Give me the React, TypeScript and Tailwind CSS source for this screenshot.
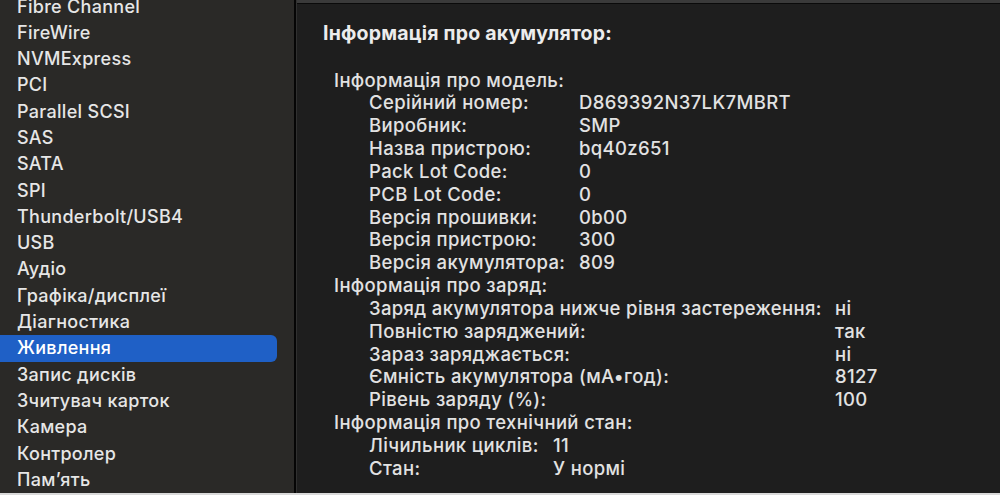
const SIDEBAR_ITEMS = [
  "Fibre Channel",
  "FireWire",
  "NVMExpress",
  "PCI",
  "Parallel SCSI",
  "SAS",
  "SATA",
  "SPI",
  "Thunderbolt/USB4",
  "USB",
  "Аудіо",
  "Графіка/дисплеї",
  "Діагностика",
  "Живлення",
  "Запис дисків",
  "Зчитувач карток",
  "Камера",
  "Контролер",
  "Пам’ять",
];

const SELECTED = "Живлення";

type Group = {
  title: string;
  labelWidth: string;
  rows: [string, string][];
};

const GROUPS: Group[] = [
  {
    title: "Інформація про модель:",
    labelWidth: "w-[210px]",
    rows: [
      ["Серійний номер:", "D869392N37LK7MBRT"],
      ["Виробник:", "SMP"],
      ["Назва пристрою:", "bq40z651"],
      ["Pack Lot Code:", "0"],
      ["PCB Lot Code:", "0"],
      ["Версія прошивки:", "0b00"],
      ["Версія пристрою:", "300"],
      ["Версія акумулятора:", "809"],
    ],
  },
  {
    title: "Інформація про заряд:",
    labelWidth: "w-[466px]",
    rows: [
      ["Заряд акумулятора нижче рівня застереження:", "ні"],
      ["Повністю заряджений:", "так"],
      ["Зараз заряджається:", "ні"],
      ["Ємність акумулятора (мА•год):", "8127"],
      ["Рівень заряду (%):", "100"],
    ],
  },
  {
    title: "Інформація про технічний стан:",
    labelWidth: "w-[184px]",
    rows: [
      ["Лічильник циклів:", "11"],
      ["Стан:", "У нормі"],
    ],
  },
];

export default function App() {
  return (
    <div className="w-[1000px] h-[495px] flex flex-col overflow-hidden bg-[#1e1e1e] font-['Inter','Noto_Sans',sans-serif] antialiased">
      <div className="flex flex-1 min-h-0">
        {/* Sidebar */}
        <div className="w-[294px] shrink-0 bg-[#2a2927] overflow-hidden">
          <ul className="-mt-[6.5px]">
            {SIDEBAR_ITEMS.map((item) => {
              const isSelected = item === SELECTED;
              return (
                <li
                  key={item}
                  className={
                    isSelected
                      ? "w-[277px] h-[26.3px] leading-[26.3px] pl-[17px] text-[18px] font-medium tracking-[0.3px] whitespace-nowrap text-white bg-[#1f60c6] rounded-r-md"
                      : "w-[277px] h-[26.3px] leading-[26.3px] pl-[17px] text-[18px] font-medium tracking-[0.3px] whitespace-nowrap text-[#e6e6e6]"
                  }
                >
                  {item}
                </li>
              );
            })}
          </ul>
        </div>

        <div className="w-[2px] bg-[#050505]" />
        <div className="w-px bg-[#303030]" />

        {/* Details */}
        <div className="flex-1 flex flex-col min-w-0">
          <div className="h-[3px] bg-[#3a3a3a]" />
          <div className="h-px bg-[#0a0a0a]" />
          <div className="pl-[26px] pt-[17.5px] text-[18.5px] font-medium tracking-[0.35px] text-[#e2e2e2] whitespace-nowrap">
            <div className="leading-[23px] text-[19.5px] font-bold tracking-[0.2px] text-[#ececec]">
              Інформація про акумулятор:
            </div>
            <div className="mt-[24px] pl-[11px]">
              {GROUPS.map((group) => (
                <div key={group.title}>
                  <div className="leading-[22.85px]">{group.title}</div>
                  {group.rows.map(([label, value]) => (
                    <div key={label} className="flex pl-[35px] leading-[22.85px]">
                      <span className={`${group.labelWidth} shrink-0`}>{label}</span>
                      <span>{value}</span>
                    </div>
                  ))}
                </div>
              ))}
            </div>
          </div>
        </div>
      </div>
      <div className="h-[2px] bg-[#d9d9d9]" />
    </div>
  );
}
